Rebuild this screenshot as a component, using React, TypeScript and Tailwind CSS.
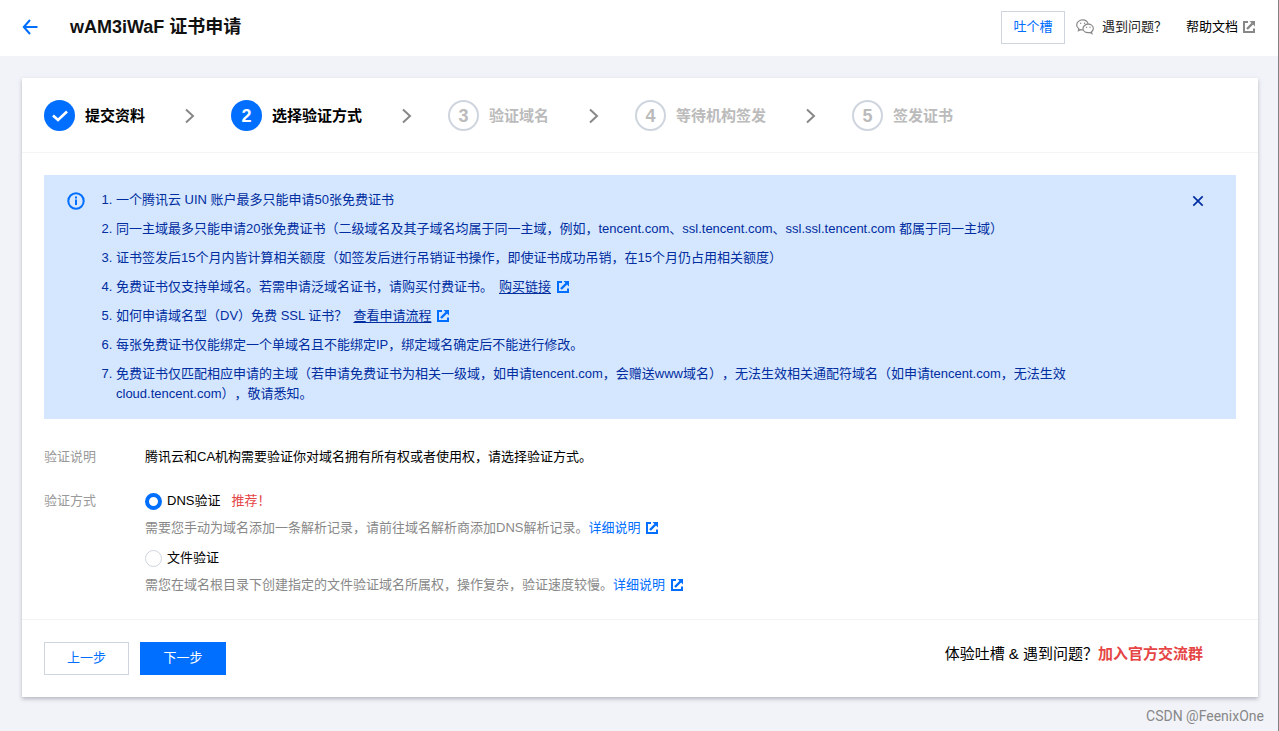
import { Fragment, useState, type ReactNode } from 'react';

type Step = { label: string; state: 'done' | 'current' | 'todo' };

const steps: Step[] = [
  { label: '提交资料', state: 'done' },
  { label: '选择验证方式', state: 'current' },
  { label: '验证域名', state: 'todo' },
  { label: '等待机构签发', state: 'todo' },
  { label: '签发证书', state: 'todo' },
];

function BackIcon() {
  return (
    <svg width="16" height="16" viewBox="0 0 16 16" fill="none" stroke="#006eff" strokeWidth="2" aria-hidden="true">
      <path d="M8 1L1.8 8L8 15M1.5 8H15.5" />
    </svg>
  );
}

function ExternalIcon({ className = '' }: { className?: string }) {
  return (
    <svg
      className={`inline-block size-3 shrink-0 ${className}`}
      viewBox="0 0 12 12"
      fill="none"
      stroke="currentColor"
      strokeWidth="2"
      aria-hidden="true"
    >
      <path d="M5 1H1V11H11V7.5" />
      <path d="M4 8L9.500 2.500" strokeWidth="2.400" />
      <path d="M6.500 0H12V5.500Z" fill="currentColor" stroke="none" />
    </svg>
  );
}

function ChatIcon() {
  return (
    <svg width="18" height="16" viewBox="0 0 18 16" fill="none" stroke="#888" strokeWidth="1.200" aria-hidden="true">
      <path d="M12.200 5.100C11.600 2.500 9.300.9 6.600.9 3.400.9.7 3.100.7 5.900c0 1.600.9 3 2.200 3.900L2.400 11.700l2.100-1.100c.8.2 1.600.3 2.400.3" />
      <path d="M12.200 5.200c2.900 0 5.100 1.900 5.100 4.300 0 1.300-.7 2.500-1.800 3.300l.4 1.700-1.900-1c-.6.1-1.200.2-1.800.2-2.900 0-5.200-1.900-5.200-4.200s2.300-4.300 5.200-4.300z" />
      <circle cx="4.700" cy="4.300" r=".7" fill="#888" stroke="none" />
      <circle cx="8.600" cy="4.300" r=".7" fill="#888" stroke="none" />
      <circle cx="10.500" cy="8.300" r=".7" fill="#888" stroke="none" />
      <circle cx="14" cy="8.300" r=".7" fill="#888" stroke="none" />
    </svg>
  );
}

function InfoIcon() {
  return (
    <svg width="18" height="18" viewBox="0 0 18 18" fill="none" stroke="#006eff" strokeWidth="2" aria-hidden="true">
      <circle cx="9" cy="9" r="7.700" />
      <path d="M9 7.500V13M9 4.500V6.500" />
    </svg>
  );
}

function StepList() {
  return (
    <ol className="flex items-center border-b border-[#f4f4f6] px-[22px] pt-[22px] pb-[21px]">
      {steps.map((step, i) => {
        const active = step.state !== 'todo';
        return (
          <Fragment key={step.label}>
            {i > 0 && (
              <li aria-hidden="true" className="mr-9 ml-10">
                <svg width="10" height="16" viewBox="0 0 10 16" fill="none" stroke="#888" strokeWidth="2">
                  <path d="M1 1.500L8 8L1 14.500" />
                </svg>
              </li>
            )}
            <li
              className={`flex items-center gap-2.5 text-[15px] leading-5 font-bold ${active ? 'text-black' : 'text-[#bbb]'}`}
              aria-current={step.state === 'current' ? 'step' : undefined}
            >
              <span
                className={`flex size-[31px] items-center justify-center rounded-full text-lg ${
                  active ? 'bg-[#006eff] text-white' : 'border-2 border-[#cfd5de]'
                }`}
              >
                {step.state === 'done' ? (
                  <svg width="16" height="12" viewBox="0 0 16 12" fill="none" stroke="white" strokeWidth="2.600" aria-label="已完成">
                    <path d="M1 5.500L6 10L15 1.500" />
                  </svg>
                ) : (
                  i + 1
                )}
              </span>
              {step.label}
            </li>
          </Fragment>
        );
      })}
    </ol>
  );
}

function NoticeLink({ children }: { children: ReactNode }) {
  return (
    <a href="#" className="ml-1.5">
      <span className="underline underline-offset-2">{children}</span>
      <ExternalIcon className="ml-1.5 -mt-0.5 text-[#006eff]" />
    </a>
  );
}

function Notice({ onClose }: { onClose: () => void }) {
  return (
    <section className="mt-[22px] flex bg-[#d5e7ff] py-[15px] pr-8 pl-[23px] text-[#002da0]">
      <div className="w-[34px] shrink-0 pt-0.5">
        <InfoIcon />
      </div>
      <ol className="min-w-0 flex-1 list-decimal space-y-[9px] pr-10 pl-[15px] leading-5">
        <li>一个腾讯云 UIN 账户最多只能申请50张免费证书</li>
        <li>同一主域最多只能申请20张免费证书（二级域名及其子域名均属于同一主域，例如，tencent.com、ssl.tencent.com、ssl.ssl.tencent.com 都属于同一主域）</li>
        <li>证书签发后15个月内皆计算相关额度（如签发后进行吊销证书操作，即使证书成功吊销，在15个月仍占用相关额度）</li>
        <li>
          免费证书仅支持单域名。若需申请泛域名证书，请购买付费证书。
          <NoticeLink>购买链接</NoticeLink>
        </li>
        <li>
          如何申请域名型（DV）免费 SSL 证书？
          <NoticeLink>查看申请流程</NoticeLink>
        </li>
        <li>每张免费证书仅能绑定一个单域名且不能绑定IP，绑定域名确定后不能进行修改。</li>
        <li>免费证书仅匹配相应申请的主域（若申请免费证书为相关一级域，如申请tencent.com，会赠送www域名），无法生效相关通配符域名（如申请tencent.com，无法生效cloud.tencent.com），敬请悉知。</li>
      </ol>
      <button type="button" aria-label="关闭" onClick={onClose} className="mt-[5px] self-start">
        <svg width="12" height="12" viewBox="0 0 12 12" fill="none" stroke="currentColor" strokeWidth="1.700">
          <path d="M1.300 1.300L10.700 10.700M10.700 1.300L1.300 10.700" />
        </svg>
      </button>
    </section>
  );
}

type OptionProps = {
  id: string;
  label: string;
  badge?: string;
  help: string;
  checked: boolean;
  onSelect: () => void;
};

function MethodOption({ id, label, badge, help, checked, onSelect }: OptionProps) {
  return (
    <div>
      <div className="flex h-5 items-center">
        <input
          type="radio"
          name="method"
          id={id}
          checked={checked}
          onChange={onSelect}
          className="size-[17px] appearance-none rounded-full border border-[#cfd5de] bg-white checked:border-4 checked:border-[#006eff]"
        />
        <label htmlFor={id} className="pl-[5px] text-black">
          {label}
        </label>
        {badge && <span className="ml-[11px] text-[#e54545]">{badge}</span>}
      </div>
      <p className="mt-[7px] text-[#888]">
        {help}
        <a href="#" className="text-[#006eff]">
          详细说明
          <ExternalIcon className="ml-1.5 -mt-0.5" />
        </a>
      </p>
    </div>
  );
}

export default function App() {
  const [method, setMethod] = useState('dns');
  const [showNotice, setShowNotice] = useState(true);

  return (
    <div className="flex min-h-screen flex-col border-r border-[#808088] bg-[#f2f3f8] font-['Liberation_Sans','Noto_Sans_CJK_SC',sans-serif] text-[13px] leading-5 text-black [text-spacing-trim:space-all]">
      <header className="flex h-14 items-center bg-white pr-[23px] pb-0.5 pl-[22px]">
        <a href="#" aria-label="返回">
          <BackIcon />
        </a>
        <h1 className="ml-8 text-lg font-bold text-[#111]">wAM3iWaF 证书申请</h1>
        <div className="ml-auto flex items-center">
          <button type="button" className="h-[33px] w-16 border border-[#cfd5de] bg-white text-[#006eff]">
            吐个槽
          </button>
          <a href="#" className="ml-[11px] flex items-center gap-2 text-[#222]">
            <ChatIcon />
            遇到问题？
          </a>
          <a href="#" className="ml-[19px] flex items-center gap-[5px]">
            帮助文档
            <ExternalIcon className="text-[#888]" />
          </a>
        </div>
      </header>

      <main className="mt-[22px] mr-5 ml-[22px] bg-white shadow-[0_2px_4px_rgba(54,58,80,0.32)]">
        <StepList />
        <div className="px-[22px]">
          {showNotice && <Notice onClose={() => setShowNotice(false)} />}
          <div className="grid grid-cols-[101px_1fr] gap-y-6 pt-7 pb-6">
            <div className="text-[#999]">验证说明</div>
            <p>腾讯云和CA机构需要验证你对域名拥有所有权或者使用权，请选择验证方式。</p>
            <div className="text-[#999]">验证方式</div>
            <div role="radiogroup" aria-label="验证方式" className="space-y-2.5">
              <MethodOption
                id="method-dns"
                label="DNS验证"
                badge="推荐！"
                help="需要您手动为域名添加一条解析记录，请前往域名解析商添加DNS解析记录。"
                checked={method === 'dns'}
                onSelect={() => setMethod('dns')}
              />
              <MethodOption
                id="method-file"
                label="文件验证"
                help="需您在域名根目录下创建指定的文件验证域名所属权，操作复杂，验证速度较慢。"
                checked={method === 'file'}
                onSelect={() => setMethod('file')}
              />
            </div>
          </div>
        </div>
        <div className="flex items-start border-t border-[#f4f4f6] p-[22px]">
          <button type="button" className="h-[33px] w-[85px] border border-[#cfd5de] bg-white pb-0.5 text-[#006eff]">
            上一步
          </button>
          <button type="button" className="ml-[11px] h-[33px] w-[86px] bg-[#006eff] pb-0.5 text-white">
            下一步
          </button>
          <p className="mr-[33px] ml-auto text-[15px] leading-6">
            体验吐槽 &amp; 遇到问题？
            <a href="#" className="font-bold text-[#e54545]">
              加入官方交流群
            </a>
          </p>
        </div>
      </main>

      <footer className="mt-[9px] pr-3.5 text-right font-[Roboto,sans-serif] text-sm leading-5 text-[#888]">CSDN @FeenixOne</footer>
    </div>
  );
}
